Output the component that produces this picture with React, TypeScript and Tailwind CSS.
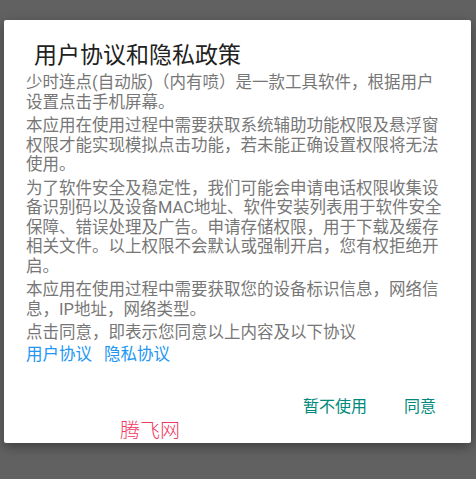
import React from "react";

const paragraphs: string[][] = [
  ["少时连点(自动版)（内有喷）是一款工具软件，根据用户", "设置点击手机屏幕。"],
  [
    "本应用在使用过程中需要获取系统辅助功能权限及悬浮窗",
    "权限才能实现模拟点击功能，若未能正确设置权限将无法",
    "使用。",
  ],
  [
    "为了软件安全及稳定性，我们可能会申请电话权限收集设",
    "备识别码以及设备MAC地址、软件安装列表用于软件安全",
    "保障、错误处理及广告。申请存储权限，用于下载及缓存",
    "相关文件。以上权限不会默认或强制开启，您有权拒绝开",
    "启。",
  ],
  ["本应用在使用过程中需要获取您的设备标识信息，网络信", "息，IP地址，网络类型。"],
  ["点击同意，即表示您同意以上内容及以下协议"],
];

export default function App() {
  return (
    <div
      className="relative w-[476px] h-[479px] bg-[#616161] pt-[20px] pl-[4px] overflow-hidden"
      style={{ fontFamily: 'Roboto, "Noto Sans CJK SC", sans-serif' }}
    >
      <div className="w-[467px] bg-white rounded-[2px] shadow-[0_4px_12px_rgba(0,0,0,0.35)] pt-[22px] pb-[18px]">
        <div className="pl-[30px] h-[28px] leading-[28px] text-[23px] text-[#212121]">
          用户协议和隐私政策
        </div>
        <div className="mt-[3px] pl-[22px] text-[16.5px] leading-[19.5px] text-[#777777]">
          {paragraphs.map((p, i) => (
            <div key={i} className={i === 0 ? "" : "mt-[4px]"}>
              {p.map((line, j) => (
                <div key={j} className="whitespace-nowrap">
                  {line}
                </div>
              ))}
            </div>
          ))}
          <div className="mt-[2.5px] flex gap-[12px] text-[#2196f3] whitespace-nowrap">
            <span>用户协议</span>
            <span>隐私协议</span>
          </div>
        </div>
        <div className="mt-[24px] h-[36px] flex items-center justify-end pr-[35px] gap-[37px] text-[16px] text-[#00897b]">
          <span>暂不使用</span>
          <span>同意</span>
        </div>
      </div>
      <div className="absolute left-[120px] top-[418px] text-[20px] leading-[26px] text-[#f03a5f] font-light">
        腾飞网
      </div>
    </div>
  );
}
